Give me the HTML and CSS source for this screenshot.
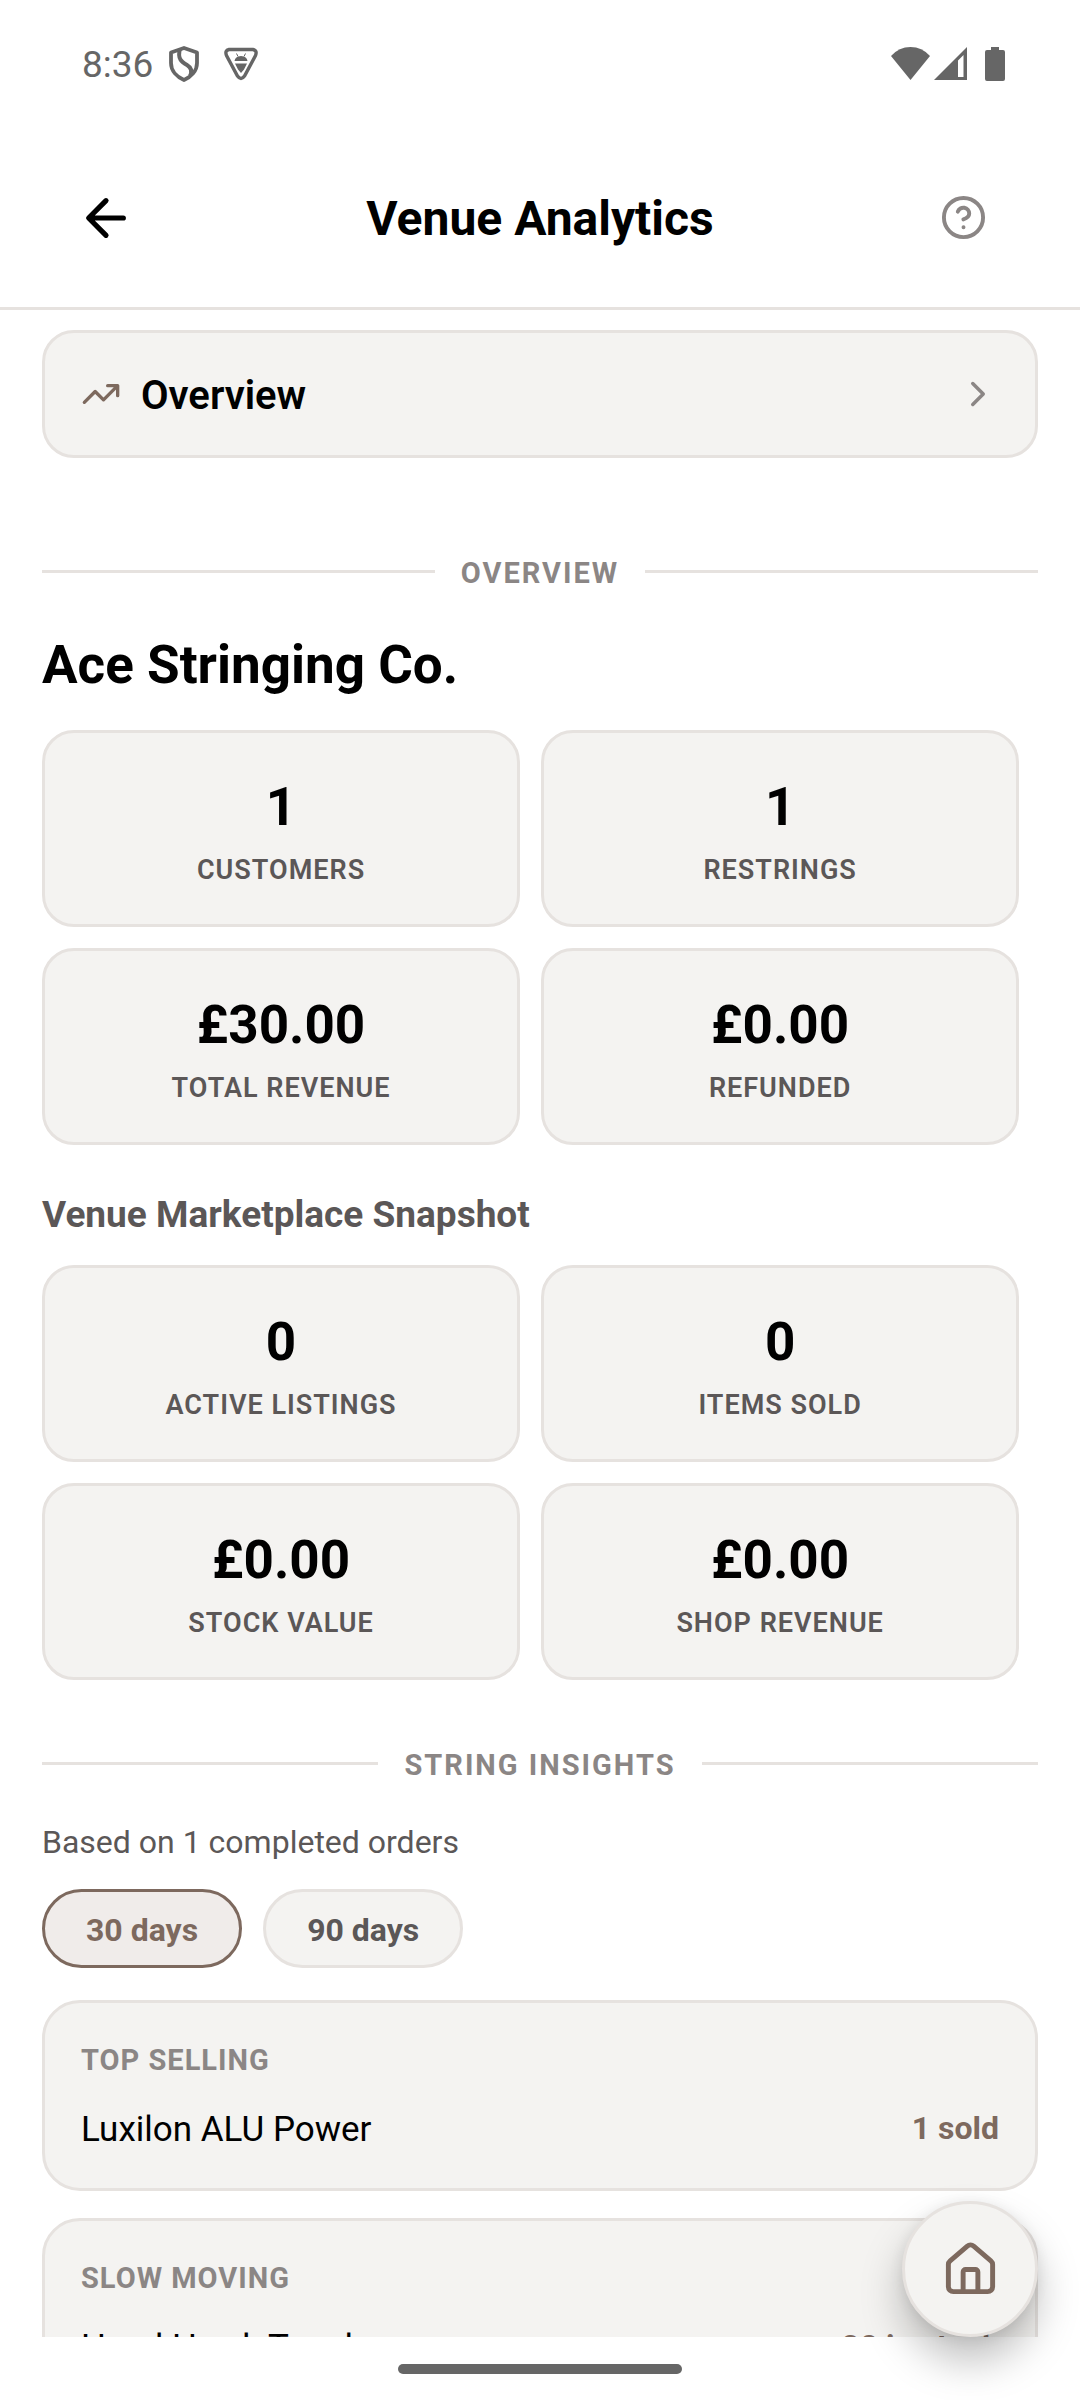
FILE: index.html
```
<!DOCTYPE html>
<html lang="en">
<head>
    <meta charset="UTF-8">
    <meta name="viewport" content="width=device-width, initial-scale=1.0">
    <title>Venue Analytics</title>
    <link rel="stylesheet" href="styles.css">
</head>
<body>
    <div class="app">
        <div class="status-bar">
            <div class="status-left">
                <span class="clock">8:36</span>
                <svg class="status-icon shield" viewBox="0 0 30 36">
                    <path d="M15 2 L28 6.500 V17 C28 25 22 31 15 34 C8 31 2 25 2 17 V6.500 Z" fill="none" stroke="currentColor" stroke-width="3.800" stroke-linejoin="round"/>
                    <path d="M11 3 C8 13 13 16 18 19 C23 22 23 26 21 30" fill="none" stroke="currentColor" stroke-width="4"/>
                </svg>
                <svg class="status-icon bug" viewBox="0 0 34 33">
                    <path d="M5 2 H29 Q33.500 3 31.500 8 L20.500 28.500 Q17 33.500 13.500 28.500 L2.500 8 Q0.500 3 5 2 Z" fill="none" stroke="currentColor" stroke-width="3.400"/>
                    <path d="M14 9 L12.500 6 M20 9 L21.500 6" fill="none" stroke="currentColor" stroke-width="1"/>
                    <path d="M10.500 13.500 Q11 9 17 8.500 Q23 9 23.500 13.500 Z M11 16 H23 L20 22 L17 25.500 L14 22 Z" fill="currentColor"/>
                </svg>
            </div>
            <div class="status-right">
                <svg class="status-icon wifi" viewBox="0 0 39 34">
                    <path d="M0 9 Q8 0 19.500 0 Q31 0 39 9 L19.500 33 Z" fill="currentColor"/>
                </svg>
                <svg class="status-icon signal" viewBox="0 0 33 34">
                    <path d="M33 0 V33 H0 Z M24 13.500 V30 H29.500 V8 Z" fill="currentColor" fill-rule="evenodd"/>
                </svg>
                <svg class="status-icon battery" viewBox="0 0 20 34">
                    <path d="M6 0 H14 V3 H18 Q20 3 20 5 V32 Q20 34 18 34 H2 Q0 34 0 32 V5 Q0 3 2 3 H6 Z" fill="currentColor"/>
                </svg>
            </div>
        </div>

        <header class="header">
            <button class="icon-btn" aria-label="Back">
                <svg class="icon-back" viewBox="0 0 24 24"><path d="M20 12 H4.500 M12 4 L4 12 L12 20"/></svg>
            </button>
            <h1>Venue Analytics</h1>
            <button class="icon-btn help" aria-label="Help">
                <svg class="icon-help" viewBox="0 0 24 24"><circle cx="12" cy="12" r="10"/><path d="M9.090 9a3 3 0 0 1 5.830 1c0 2-3 3-3 3 M12 17h.01"/></svg>
            </button>
        </header>

        <main class="content">
            <button class="nav-card">
                <svg class="icon-trend" viewBox="0 0 24 24"><path d="M16 7h6v6 M22 7l-8.500 8.500-5-5L2 17"/></svg>
                <span class="nav-title">Overview</span>
                <svg class="icon-chevron" viewBox="0 0 24 24"><path d="M9 18l6-6-6-6"/></svg>
            </button>

            <div class="divider first"><span>OVERVIEW</span></div>

            <h2>Ace Stringing Co.</h2>
            <div class="stats">
                <div class="stat-card"><p class="value">1</p><p class="label">CUSTOMERS</p></div>
                <div class="stat-card"><p class="value">1</p><p class="label">RESTRINGS</p></div>
                <div class="stat-card"><p class="value">£30.00</p><p class="label">TOTAL REVENUE</p></div>
                <div class="stat-card"><p class="value">£0.00</p><p class="label">REFUNDED</p></div>
            </div>

            <h3>Venue Marketplace Snapshot</h3>
            <div class="stats">
                <div class="stat-card"><p class="value">0</p><p class="label">ACTIVE LISTINGS</p></div>
                <div class="stat-card"><p class="value">0</p><p class="label">ITEMS SOLD</p></div>
                <div class="stat-card"><p class="value">£0.00</p><p class="label">STOCK VALUE</p></div>
                <div class="stat-card"><p class="value">£0.00</p><p class="label">SHOP REVENUE</p></div>
            </div>

            <div class="divider"><span>STRING INSIGHTS</span></div>

            <p class="note">Based on 1 completed orders</p>
            <div class="pills">
                <button class="pill active">30 days</button>
                <button class="pill">90 days</button>
            </div>

            <section class="list-card">
                <h4>TOP SELLING</h4>
                <div class="row"><span>Luxilon ALU Power</span><strong>1 sold</strong></div>
            </section>
            <section class="list-card">
                <h4>SLOW MOVING</h4>
                <div class="row"><span>Head Hawk Touch</span><strong>20 in stock</strong></div>
            </section>
        </main>

        <footer class="system-nav">
            <div class="handle"></div>
        </footer>

        <button class="home-btn" aria-label="Home">
            <svg class="icon-home" viewBox="0 0 24 24"><path d="M15 21v-8a1 1 0 0 0-1-1h-4a1 1 0 0 0-1 1v8 M3 10a2 2 0 0 1 .709-1.528l7-5.999a2 2 0 0 1 2.582 0l7 5.999A2 2 0 0 1 21 10v9a2 2 0 0 1-2 2H5a2 2 0 0 1-2-2z"/></svg>
        </button>
    </div>
</body>
</html>
```
FILE: styles.css
```
* {
    margin: 0;
    padding: 0;
    box-sizing: border-box;
}

body {
    font-family: Roboto, sans-serif;
    background: #fff;
    color: #000;
}

button {
    font-family: inherit;
    color: inherit;
    border: none;
    background: none;
    cursor: pointer;
}

svg {
    display: block;
    flex-shrink: 0;
}

.app {
    position: relative;
    display: flex;
    flex-direction: column;
    height: 100vh;
    overflow: hidden;
}

/* Status bar */
.status-bar {
    display: flex;
    justify-content: space-between;
    align-items: center;
    height: 128px;
    padding: 0 75px 0 82px;
    color: #666;
}

.status-left,
.status-right {
    display: flex;
    align-items: center;
}

.clock {
    font-size: 37px;
    margin-right: 16px;
}

.status-icon {
    height: 34px;
}

.shield {
    width: 30px;
    height: 36px;
    margin-right: 25px;
}

.bug {
    width: 34px;
}

.wifi {
    width: 39px;
    margin-right: 4px;
}

.signal {
    width: 33px;
    margin-right: 18px;
}

.battery {
    width: 20px;
}

/* Header */
.header {
    display: flex;
    justify-content: space-between;
    align-items: center;
    height: 182px;
    padding: 0 80px;
    border-bottom: 3px solid #e6e2df;
}

h1 {
    padding-top: 2px;
    font-size: 48px;
    font-weight: 700;
}

.icon-btn {
    display: flex;
    width: 72px;
}

.icon-btn.help {
    justify-content: center;
    color: #8b8685;
}

.icon-btn svg,
.nav-card svg,
.home-btn svg {
    fill: none;
    stroke: currentColor;
    stroke-width: 2;
    stroke-linecap: round;
    stroke-linejoin: round;
}

.icon-btn .icon-back {
    width: 52px;
    height: 52px;
    stroke-width: 2.4;
}

.icon-help {
    width: 47px;
    height: 47px;
}

/* Content */
.content {
    flex: 1;
    min-height: 0;
    overflow: hidden;
    padding: 20px 42px 0;
}

.nav-card {
    display: flex;
    align-items: center;
    width: 100%;
    height: 128px;
    padding: 0 36px;
    background: #f4f3f1;
    border: 3px solid #e6e2df;
    border-radius: 32px;
}

.icon-trend {
    width: 40px;
    height: 40px;
    color: #7d695e;
}

.icon-chevron {
    width: 42px;
    height: 42px;
    margin-left: auto;
    color: #8b8685;
}

.nav-title {
    padding-top: 2px;
    font-size: 40px;
    font-weight: 600;
    margin-left: 20px;
}

.divider {
    display: flex;
    align-items: center;
    gap: 26px;
    margin-top: 64px;
    font-size: 29px;
    line-height: 36px;
    font-weight: 700;
    letter-spacing: 2px;
    color: #8b8685;
}

.divider span {
    padding-top: 3px;
}

.divider.first {
    margin-top: 94px;
}

.divider::before,
.divider::after {
    content: "";
    flex: 1;
    height: 3px;
    background: #e6e2df;
}

h2 {
    margin: 42px 0 33px;
    font-size: 53px;
    line-height: 64px;
    font-weight: 700;
}

h3 {
    margin: 48px 0 28px;
    font-size: 37px;
    line-height: 44px;
    font-weight: 700;
    color: #5b5757;
}

.stats {
    display: flex;
    flex-wrap: wrap;
    gap: 21px;
}

.stat-card {
    width: 48%;
    height: 197px;
    padding-top: 43px;
    text-align: center;
    background: #f4f3f1;
    border: 3px solid #e6e2df;
    border-radius: 32px;
}

.value {
    font-size: 53px;
    line-height: 62px;
    font-weight: 700;
}

.label {
    margin-top: 16px;
    font-size: 27px;
    line-height: 32px;
    font-weight: 600;
    letter-spacing: 1px;
    color: #5b5757;
}

.note {
    margin-top: 39px;
    font-size: 32px;
    line-height: 40px;
    color: #5b5757;
}

.pills {
    display: flex;
    gap: 21px;
    margin: 27px 0 32px;
}

.pill {
    height: 79px;
    padding: 2px 41px 0;
    font-size: 32px;
    font-weight: 700;
    color: #5b5757;
    background: #f4f3f1;
    border: 3px solid #e6e2df;
    border-radius: 40px;
}

.pill.active {
    color: #7d695e;
    background: #f0ecea;
    border-color: #7d695e;
}

.list-card {
    height: 191px;
    margin-bottom: 27px;
    padding: 37px 36px 0;
    background: #f4f3f1;
    border: 3px solid #e6e2df;
    border-radius: 38px;
}

h4 {
    font-size: 29px;
    line-height: 40px;
    font-weight: 700;
    letter-spacing: 1px;
    color: #8b8685;
}

.row {
    display: flex;
    justify-content: space-between;
    align-items: flex-start;
    margin-top: 28px;
    font-size: 35px;
    line-height: 44px;
}

.row strong {
    font-size: 32px;
    line-height: 40px;
    font-weight: 700;
    color: #7d695e;
}

/* Gesture bar */
.system-nav {
    display: flex;
    justify-content: center;
    height: 63px;
    padding-top: 27px;
}

.handle {
    width: 284px;
    height: 10px;
    background: #666;
    border-radius: 5px;
}

/* Floating home button */
.home-btn {
    position: absolute;
    right: 42px;
    bottom: 63px;
    display: flex;
    justify-content: center;
    align-items: center;
    width: 136px;
    height: 136px;
    background: #f4f3f1;
    border: 3px solid #e6e2df;
    border-radius: 50%;
    box-shadow: 0 24px 42px rgba(0, 0, 0, 0.25), 0 2px 14px rgba(0, 0, 0, 0.08);
    color: #7d695e;
}

.icon-home {
    width: 59px;
    height: 59px;
}
```
